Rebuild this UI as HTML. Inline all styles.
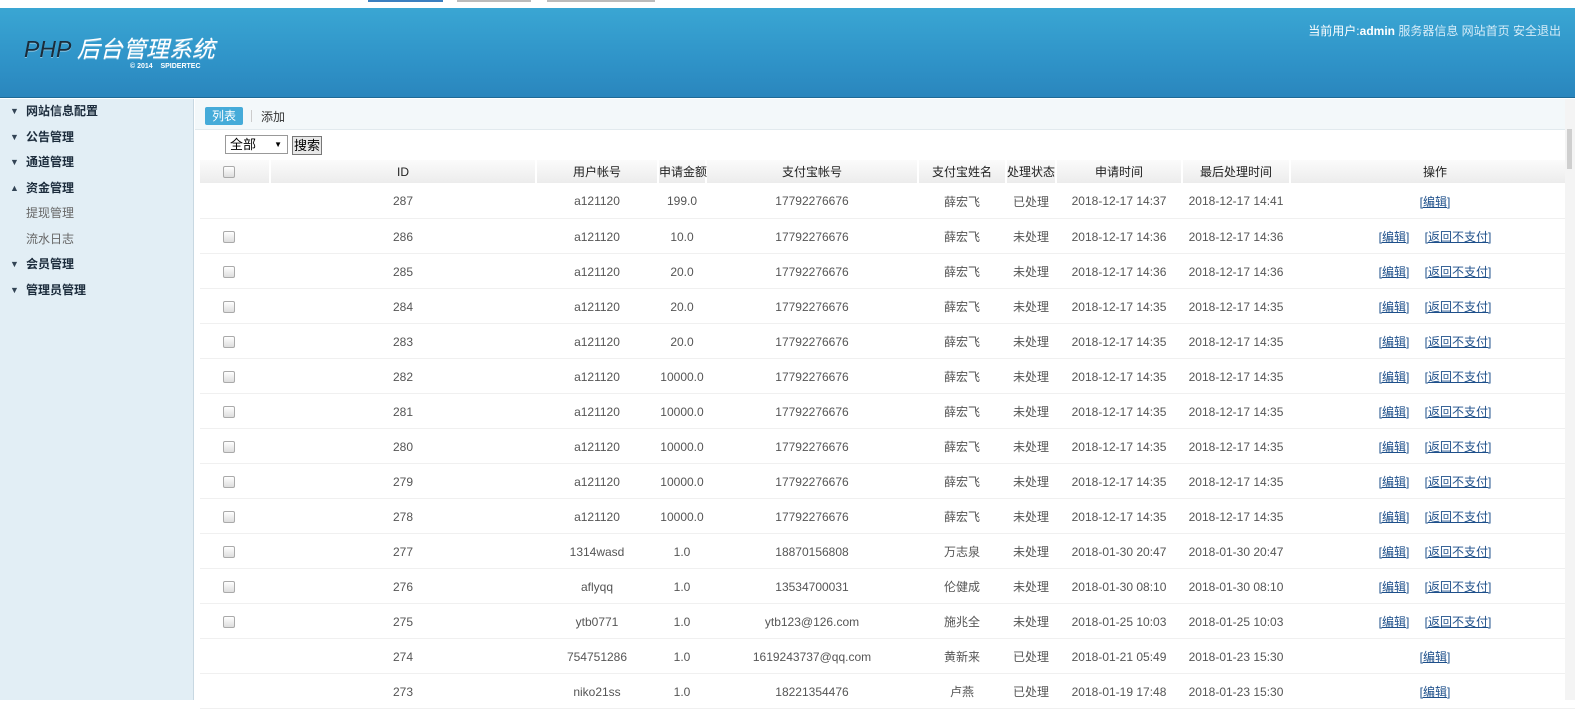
<!DOCTYPE html>
<html><head><meta charset="utf-8"><style>
*{margin:0;padding:0;box-sizing:border-box}
body{width:1575px;height:700px;overflow:hidden;background:#fff;font-family:"Liberation Sans","Noto Sans CJK SC",sans-serif;font-size:12px;color:#444;position:relative}
.tb{position:absolute;top:0;height:2px;border-bottom:2px solid #bbb}
.header{position:absolute;left:0;top:8px;width:1575px;height:90px;background:linear-gradient(180deg,#3aa6d3 0%,#2f93c8 60%,#2a86bd 100%);border-bottom:1px solid #1f6a96}
.logo{position:absolute;left:24px;top:22px;color:#1a2b3a;font-size:23px;font-style:italic;text-shadow:0 1px 0 rgba(255,255,255,.4)}
.logo span{color:#fff;font-style:italic}
.copy{position:absolute;left:130px;top:55px;color:#fff;font-size:7px;font-weight:bold}
.user{position:absolute;right:14px;top:14px;color:#fff;font-size:12px}
.user span{color:#d5ecf8}
.side{position:absolute;left:0;top:99px;width:194px;height:601px;background:#e2eef5;border-right:1px solid #c8d8e2}
.side div{height:25.5px;line-height:25px;font-size:12px;color:#1c2c3c}
.side .m{padding-left:10px;font-weight:bold}
.side .m:before{content:"▼";font-size:9px;display:inline-block;width:16px;color:#345;vertical-align:1px}
.side .m.up:before{content:"▲"}
.side .s{padding-left:26px;color:#666}
.bar{position:absolute;left:195px;top:99px;width:1370px;height:31px;background:#f3f8fa;border-bottom:1px solid #e2eaee}
.btn{position:absolute;left:10px;top:8px;width:38px;height:18px;background:#45abd9;border-radius:2px;color:#fff;text-align:center;line-height:18px}
.add{position:absolute;left:66px;top:9px;color:#333}
.add:before{content:"";position:absolute;left:-10px;top:2px;height:12px;border-left:1px solid #ccc}
.sel{position:absolute;left:225px;top:135px;width:63px;height:19px;border:1px solid #999;background:#fff;font-size:13px;line-height:17px;padding-left:4px;color:#000}
.sel:after{content:"▼";position:absolute;right:5px;top:0;font-size:8px}
.sbtn{position:absolute;left:292px;top:136px;width:30px;height:19px;border:1px solid #777;background:#e8e8e8;font-size:13px;line-height:17px;text-align:center;color:#000}
table{position:absolute;left:200px;top:160px;border-collapse:collapse;table-layout:fixed;width:1380px}
th{height:23px;background:linear-gradient(#fbfbfb,#ececec);font-weight:normal;color:#222;border-right:2px solid #fff;font-size:12px;padding:0;white-space:nowrap;overflow:visible}
td{height:35px;text-align:center;color:#555;border-bottom:1px solid #f0f0f0;padding:2px 0 0;white-space:nowrap}
th:first-child,td:first-child{text-align:left;padding-left:23px}
.cb{display:inline-block;width:12px;height:12px;border:1px solid #aaa;border-radius:2px;background:linear-gradient(#fff,#ddd);vertical-align:middle}
a{color:#1d4f8a;text-decoration:underline}
.op a{margin:0 6px}
.scroll{position:absolute;left:1565px;top:99px;width:10px;height:601px;background:#f4f4f4}
.scroll div{position:absolute;left:2px;top:30px;width:5px;height:40px;background:#cfcfcf}
</style></head><body>
<div class="tb" style="left:368px;width:75px;border-color:#3a7fc0"></div>
<div class="tb" style="left:457px;width:74px"></div>
<div class="tb" style="left:547px;width:108px"></div>
<div class="header">
<div class="logo">PHP <span>后台管理系统</span></div>
<div class="copy">© 2014 &nbsp;&nbsp; SPIDERTEC</div>
<div class="user">当前用户:<b>admin</b> <span>服务器信息 网站首页 安全退出</span></div>
</div>
<div class="side">
<div class="m">网站信息配置</div>
<div class="m">公告管理</div>
<div class="m">通道管理</div>
<div class="m up">资金管理</div>
<div class="s">提现管理</div>
<div class="s">流水日志</div>
<div class="m">会员管理</div>
<div class="m">管理员管理</div>
</div>
<div class="bar"><div class="btn">列表</div><div class="add">添加</div></div>
<div class="sel">全部</div><div class="sbtn">搜索</div>
<table>
<colgroup><col style="width:70px"><col style="width:266px"><col style="width:122px"><col style="width:48px"><col style="width:212px"><col style="width:88px"><col style="width:50px"><col style="width:126px"><col style="width:108px"><col style="width:290px"></colgroup>
<tr><th><span class="cb"></span></th><th>ID</th><th>用户帐号</th><th>申请金额</th><th>支付宝帐号</th><th>支付宝姓名</th><th>处理状态</th><th>申请时间</th><th>最后处理时间</th><th>操作</th></tr>
<tr><td></td><td>287</td><td>a121120</td><td>199.0</td><td>17792276676</td><td>薛宏飞</td><td>已处理</td><td>2018-12-17 14:37</td><td>2018-12-17 14:41</td><td class="op"><a>[编辑]</a></td></tr>
<tr><td><span class="cb"></span></td><td>286</td><td>a121120</td><td>10.0</td><td>17792276676</td><td>薛宏飞</td><td>未处理</td><td>2018-12-17 14:36</td><td>2018-12-17 14:36</td><td class="op"><a>[编辑]</a> <a>[返回不支付]</a></td></tr>
<tr><td><span class="cb"></span></td><td>285</td><td>a121120</td><td>20.0</td><td>17792276676</td><td>薛宏飞</td><td>未处理</td><td>2018-12-17 14:36</td><td>2018-12-17 14:36</td><td class="op"><a>[编辑]</a> <a>[返回不支付]</a></td></tr>
<tr><td><span class="cb"></span></td><td>284</td><td>a121120</td><td>20.0</td><td>17792276676</td><td>薛宏飞</td><td>未处理</td><td>2018-12-17 14:35</td><td>2018-12-17 14:35</td><td class="op"><a>[编辑]</a> <a>[返回不支付]</a></td></tr>
<tr><td><span class="cb"></span></td><td>283</td><td>a121120</td><td>20.0</td><td>17792276676</td><td>薛宏飞</td><td>未处理</td><td>2018-12-17 14:35</td><td>2018-12-17 14:35</td><td class="op"><a>[编辑]</a> <a>[返回不支付]</a></td></tr>
<tr><td><span class="cb"></span></td><td>282</td><td>a121120</td><td>10000.0</td><td>17792276676</td><td>薛宏飞</td><td>未处理</td><td>2018-12-17 14:35</td><td>2018-12-17 14:35</td><td class="op"><a>[编辑]</a> <a>[返回不支付]</a></td></tr>
<tr><td><span class="cb"></span></td><td>281</td><td>a121120</td><td>10000.0</td><td>17792276676</td><td>薛宏飞</td><td>未处理</td><td>2018-12-17 14:35</td><td>2018-12-17 14:35</td><td class="op"><a>[编辑]</a> <a>[返回不支付]</a></td></tr>
<tr><td><span class="cb"></span></td><td>280</td><td>a121120</td><td>10000.0</td><td>17792276676</td><td>薛宏飞</td><td>未处理</td><td>2018-12-17 14:35</td><td>2018-12-17 14:35</td><td class="op"><a>[编辑]</a> <a>[返回不支付]</a></td></tr>
<tr><td><span class="cb"></span></td><td>279</td><td>a121120</td><td>10000.0</td><td>17792276676</td><td>薛宏飞</td><td>未处理</td><td>2018-12-17 14:35</td><td>2018-12-17 14:35</td><td class="op"><a>[编辑]</a> <a>[返回不支付]</a></td></tr>
<tr><td><span class="cb"></span></td><td>278</td><td>a121120</td><td>10000.0</td><td>17792276676</td><td>薛宏飞</td><td>未处理</td><td>2018-12-17 14:35</td><td>2018-12-17 14:35</td><td class="op"><a>[编辑]</a> <a>[返回不支付]</a></td></tr>
<tr><td><span class="cb"></span></td><td>277</td><td>1314wasd</td><td>1.0</td><td>18870156808</td><td>万志泉</td><td>未处理</td><td>2018-01-30 20:47</td><td>2018-01-30 20:47</td><td class="op"><a>[编辑]</a> <a>[返回不支付]</a></td></tr>
<tr><td><span class="cb"></span></td><td>276</td><td>aflyqq</td><td>1.0</td><td>13534700031</td><td>伦健成</td><td>未处理</td><td>2018-01-30 08:10</td><td>2018-01-30 08:10</td><td class="op"><a>[编辑]</a> <a>[返回不支付]</a></td></tr>
<tr><td><span class="cb"></span></td><td>275</td><td>ytb0771</td><td>1.0</td><td>ytb123@126.com</td><td>施兆全</td><td>未处理</td><td>2018-01-25 10:03</td><td>2018-01-25 10:03</td><td class="op"><a>[编辑]</a> <a>[返回不支付]</a></td></tr>
<tr><td></td><td>274</td><td>754751286</td><td>1.0</td><td>1619243737@qq.com</td><td>黄新来</td><td>已处理</td><td>2018-01-21 05:49</td><td>2018-01-23 15:30</td><td class="op"><a>[编辑]</a></td></tr>
<tr><td></td><td>273</td><td>niko21ss</td><td>1.0</td><td>18221354476</td><td>卢燕</td><td>已处理</td><td>2018-01-19 17:48</td><td>2018-01-23 15:30</td><td class="op"><a>[编辑]</a></td></tr>
</table>
<div class="scroll"><div></div></div>
</body></html>
